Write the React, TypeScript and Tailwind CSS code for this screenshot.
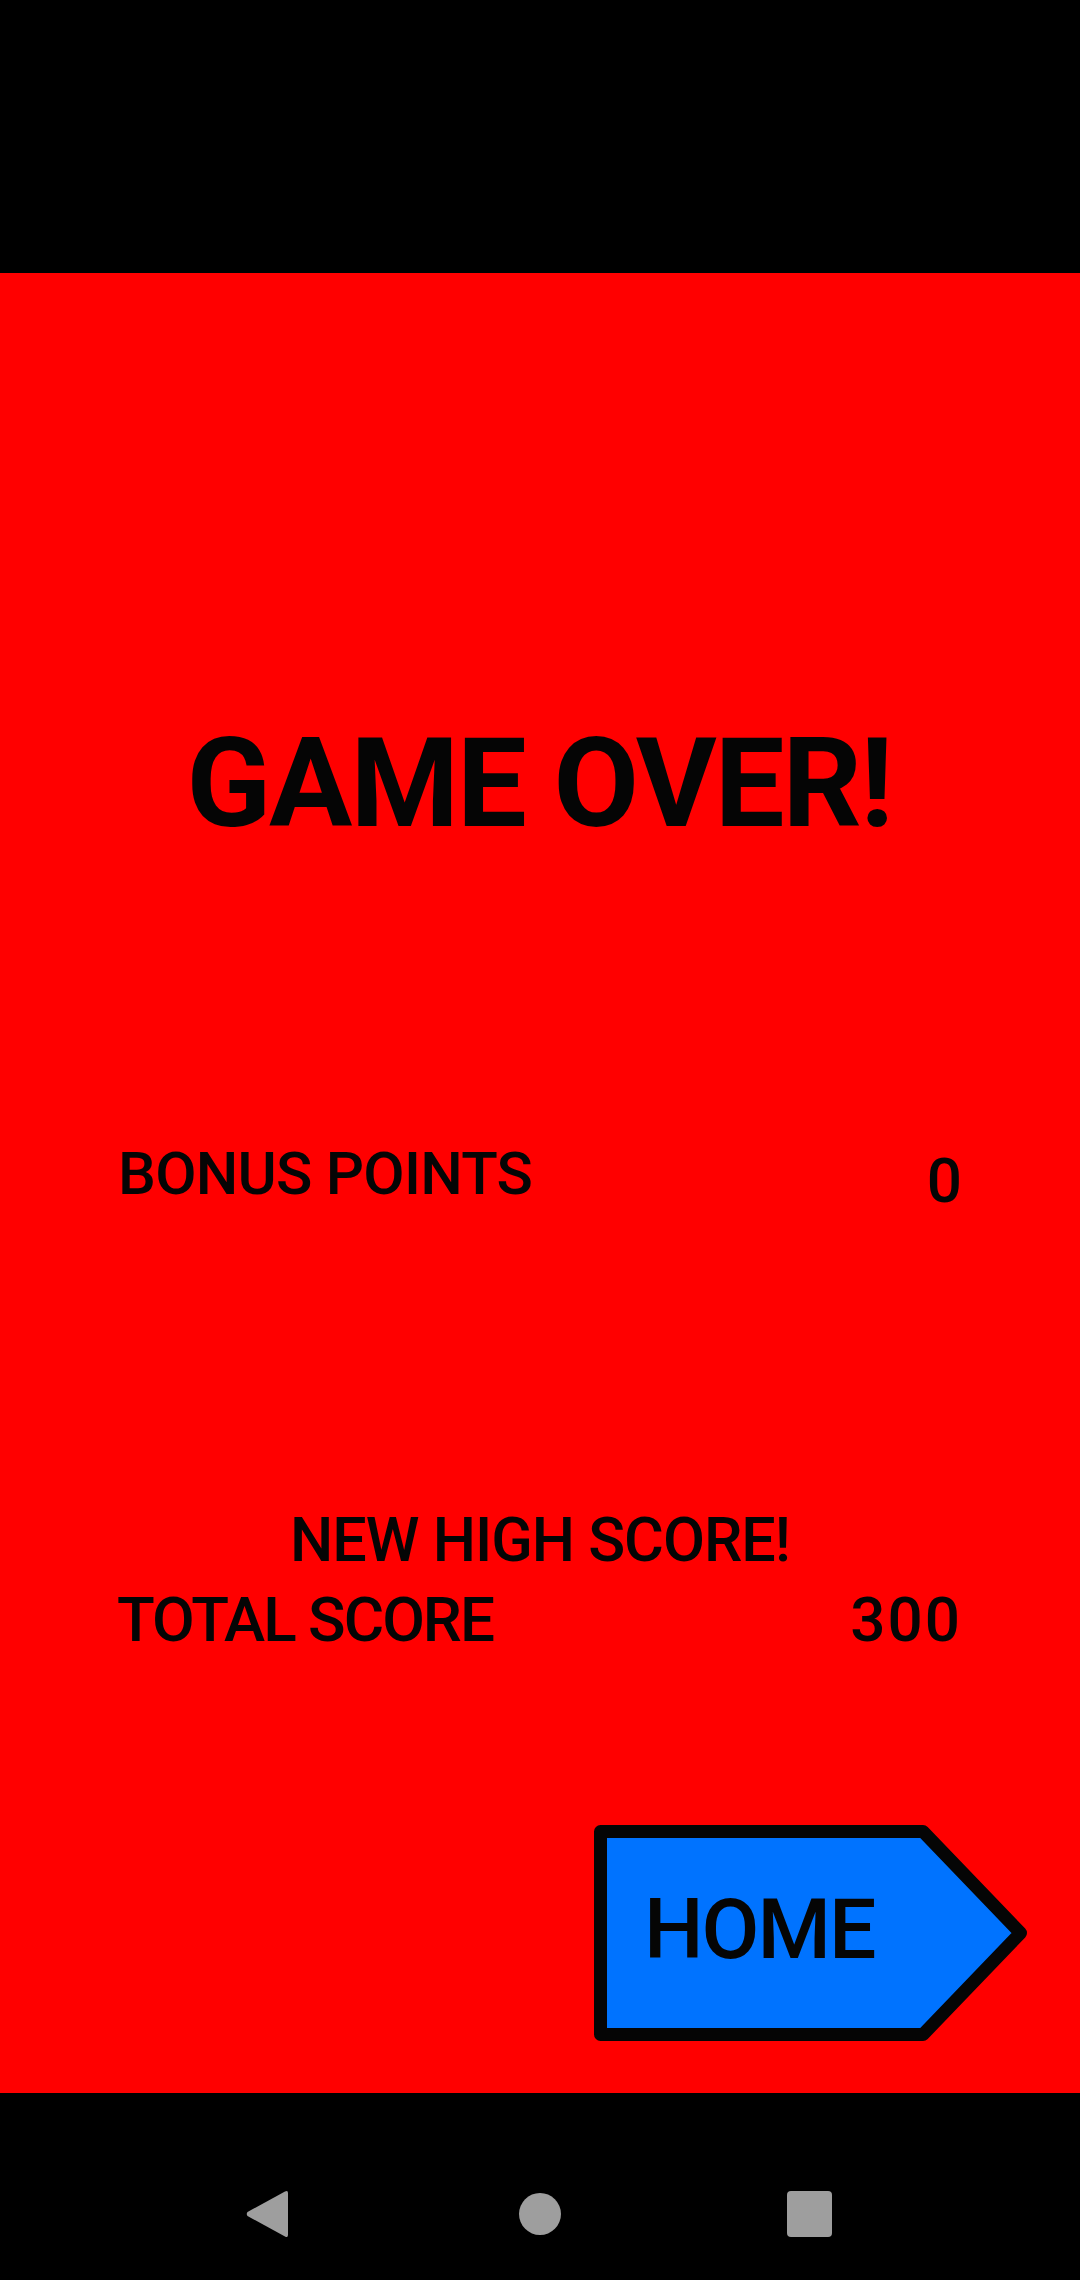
export default function App() {
  return (
    <main className="flex h-[2280px] w-[1080px] flex-col bg-black font-['Roboto',sans-serif] font-medium text-[#050505]">
      <div className="h-[273px] shrink-0 bg-black" />

      {/* red game over panel */}
      <section className="flex h-[1820px] shrink-0 flex-col bg-[#ff0000]">
        <h1 className="mt-[456px] pr-[2px] text-center text-[124px] font-bold leading-[110px] tracking-[-2px]">GAME OVER!</h1>

        <div className="mt-[305px] flex items-start justify-between pl-[118px] pr-[118px]">
          <span className="text-[60px] leading-[60px] tracking-[-0.75px]">BONUS POINTS</span>
          <span className="mt-[7px] text-[62px] leading-[60px]">0</span>
        </div>

        <p className="mt-[299px] text-center text-[61px] leading-[60px] tracking-[-1px]">NEW HIGH SCORE!</p>

        <div className="mt-[20px] flex items-start justify-between pl-[117px] pr-[118px]">
          <span className="text-[62px] leading-[60px] tracking-[-2px]">TOTAL SCORE</span>
          <span className="text-[62px] leading-[60px] tracking-[2px]">300</span>
        </div>

        <div className="mt-[175px] flex justify-end pr-[54px]">
          <HomeButton />
        </div>
      </section>

      {/* android nav bar */}
      <nav className="flex h-[187px] shrink-0 items-start pt-[97px]">
        <div className="ml-[246px]">
          <svg width="42" height="48" viewBox="0 0 42 48" className="block">
            <path d="M39 1.5 L1.5 22 Q0 24 1.5 26 L39 46.5 Q42 48 42 45 L42 3 Q42 0 39 1.5 Z" fill="#9e9e9e" />
          </svg>
        </div>
        <div className="ml-[231px] mt-[3px] h-[42px] w-[42px] rounded-full bg-[#9e9e9e]" />
        <div className="ml-[226px] mt-[1px] h-[46px] w-[45px] rounded-[4px] bg-[#9e9e9e]" />
      </nav>
    </main>
  );
}

function HomeButton() {
  return (
    <button className="relative block h-[216px] w-[432px] text-left">
      <svg width="434" height="216" viewBox="0 0 434 216" className="absolute inset-0">
        <path
          d="M6.5 6.5 L329 6.5 L426.5 108 L329 209.5 L6.5 209.5 Z"
          fill="#0073ff"
          stroke="#050505"
          strokeWidth="13"
          strokeLinejoin="round"
        />
      </svg>
      <span className="relative mb-[6px] ml-[50px] block text-[84px] leading-[84px] tracking-[-2px]">HOME</span>
    </button>
  );
}
